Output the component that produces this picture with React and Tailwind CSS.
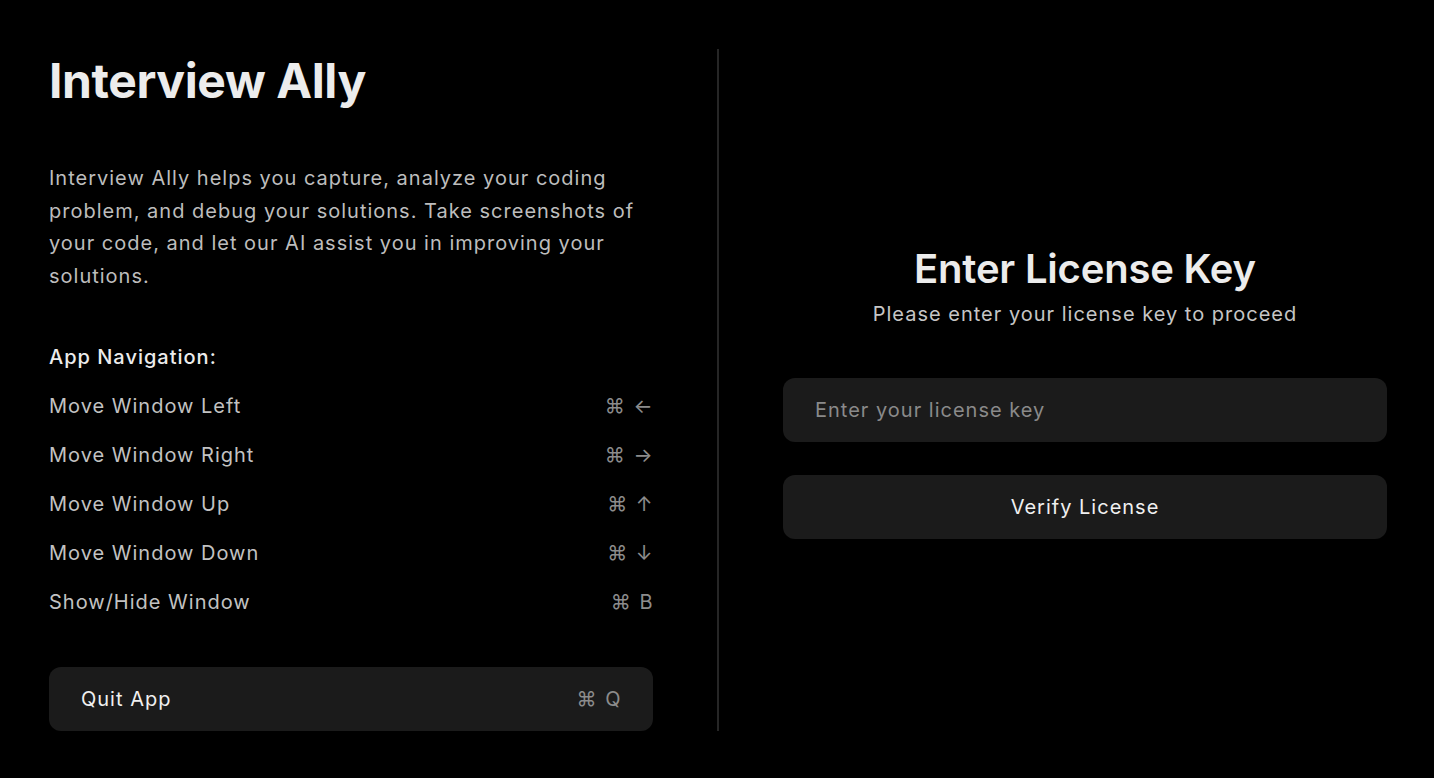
import React from 'react';

const shortcuts = [
  { label: 'Move Window Left', keys: '⌘ ←' },
  { label: 'Move Window Right', keys: '⌘ →' },
  { label: 'Move Window Up', keys: '⌘ ↑' },
  { label: 'Move Window Down', keys: '⌘ ↓' },
  { label: 'Show/Hide Window', keys: '⌘ B' },
];

const font = { fontFamily: 'Inter, "Noto Sans", sans-serif' };

export default function App() {
  return (
    <div
      className="flex h-screen w-full bg-black pl-[49px] pr-[47px] pt-[49px] pb-[47px] text-[#ececec] antialiased"
      style={font}
    >
      {/* Left: info + shortcuts */}
      <div className="flex w-[604px] shrink-0 flex-col">
        <h1 className="text-5xl font-bold leading-[63px] tracking-[-0.4px] text-[#ececec]">
          Interview Ally
        </h1>

        <p className="mt-[50px] text-xl leading-[32.5px] tracking-[1px] text-[#bdbdbd]">
          Interview Ally helps you capture, analyze your coding problem, and debug your
          solutions. Take screenshots of your code, and let our AI assist you in improving
          your solutions.
        </p>

        <div className="mt-[51px] flex flex-col gap-[21px] tracking-[1px]">
          <h2 className="text-xl font-medium leading-7 text-[#ececec]">App Navigation:</h2>
          {shortcuts.map((s) => (
            <div key={s.label} className="flex items-center justify-between text-xl leading-7">
              <span className="text-[#c2c2c2]">{s.label}</span>
              <span className="-mr-px text-xl tracking-[1.5px] text-[#8c8c8c]">{s.keys}</span>
            </div>
          ))}
        </div>

        <button className="mt-[51px] flex h-16 w-full items-center justify-between rounded-xl bg-[#1b1b1b] px-8 text-xl tracking-[1px]">
          <span className="text-[#f0f0f0]">Quit App</span>
          <span className="-mr-px tracking-[1.5px] text-[#8c8c8c]">⌘ Q</span>
        </button>
      </div>

      {/* Divider */}
      <div className="mx-[64px] w-[2px] shrink-0 bg-[#262626]" />

      {/* Right: license form */}
      <div className="flex flex-1 flex-col justify-center pt-[4px]">
        <div className="flex flex-col items-center">
          <h2 className="text-[40px] font-semibold leading-[48px] tracking-[-0.2px] text-[#ececec]">
            Enter License Key
          </h2>
          <p className="mt-[7px] text-xl leading-7 tracking-[1px] text-[#c6c6c6]">
            Please enter your license key to proceed
          </p>
        </div>

        <input
          type="text"
          placeholder="Enter your license key"
          className="mt-[50px] h-16 w-full rounded-xl bg-[#1b1b1b] px-8 text-xl tracking-[1px] text-[#ececec] placeholder:text-[#8a8a8a] outline-none"
          style={font}
        />

        <button className="mt-[33px] h-16 w-full rounded-xl bg-[#1b1b1b] text-xl tracking-[1px] text-[#f0f0f0]">
          Verify License
        </button>
      </div>
    </div>
  );
}
